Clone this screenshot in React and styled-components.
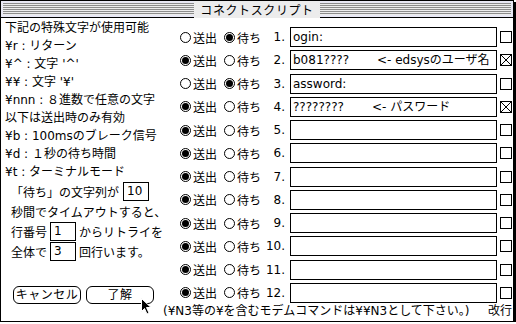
import React from 'react';
import styled, { createGlobalStyle } from 'styled-components';

const Global = createGlobalStyle`
  html, body { margin: 0; padding: 0; background: #fff; }
  body {
    font-family: "DejaVu Sans", "Noto Sans CJK JP", sans-serif;
    font-size: 12px;
    color: #000;
  }
`;

const Window = styled.div`
  position: relative;
  width: 514px;
  height: 322px;
  box-sizing: border-box;
  border: 1px solid #000;
  box-shadow: 2px 2px 0 #000;
  background: #fff;
  display: flex;
  flex-direction: column;
`;

const TitleBar = styled.div`
  height: 17px;
  flex: none;
  box-sizing: border-box;
  border-bottom: 1px solid #000;
  padding: 2px 2px 2px;
  background: #e8e8f4;
  display: flex;
`;

const Stripes = styled.div`
  flex: 1;
  display: flex;
  justify-content: center;
  align-items: center;
  background: repeating-linear-gradient(to bottom, #8c8c8c 0 1px, #ececec 1px 2px);
`;

const Title = styled.div`
  background: #ececec;
  padding: 0 6px;
  height: 17px;
  line-height: 17px;
  letter-spacing: 0.6px;
  font-family: "Noto Sans CJK JP", sans-serif;
`;

const Body = styled.div`
  flex: 1;
  display: grid;
  grid-template-columns: 162px 1fr;
  min-height: 0;
`;

const LeftCol = styled.div`
  display: flex;
  flex-direction: column;
  padding: 1px 0 0 4px;
  white-space: nowrap;
`;

const HelpLine = styled.div`
  height: 18px;
  line-height: 18px;
`;

const Settings = styled.div`
  padding-left: 6px;
  display: flex;
  flex-direction: column;
`;

const SettingLine = styled.div`
  height: 20px;
  display: flex;
  align-items: center;
  gap: ${p => p.$gap || 3}px;
`;

const NumBox = styled.div`
  width: 26px;
  height: 19px;
  box-sizing: border-box;
  border: 1px solid #000;
  padding-left: 3px;
  line-height: 17px;
`;

const Buttons = styled.div`
  margin-top: auto;
  margin-bottom: 18px;
  padding-left: 8px;
  display: flex;
  gap: 5px;
`;

const Button = styled.div`
  width: ${p => p.$w}px;
  height: 18px;
  box-sizing: border-box;
  border: 1px solid #000;
  border-radius: 6px;
  display: flex;
  align-items: center;
  justify-content: center;
  line-height: 16px;
  letter-spacing: 0.5px;
`;

const RightCol = styled.div`
  display: flex;
  flex-direction: column;
  padding-top: 9px;
  min-width: 0;
`;

const Rows = styled.div`
  display: flex;
  flex-direction: column;
  gap: 3.27px;
  padding-left: 17px;
`;

const Row = styled.div`
  height: 20px;
  display: flex;
  align-items: center;
`;

const Radio = styled.span`
  width: 11px;
  height: 11px;
  box-sizing: border-box;
  border: 1px solid #000;
  border-radius: 50%;
  display: flex;
  align-items: center;
  justify-content: center;
  flex: none;
  &::after {
    content: "";
    width: 7px;
    height: 7px;
    border-radius: 50%;
    background: ${p => (p.$on ? '#000' : 'transparent')};
  }
`;

const RadioLabel = styled.span`
  width: ${p => p.$w}px;
  margin-left: 2px;
  flex: none;
`;

const RowNum = styled.span`
  width: 29px;
  padding-right: 5px;
  box-sizing: border-box;
  text-align: right;
  flex: none;
`;

const Field = styled.div`
  width: 207px;
  height: 20px;
  box-sizing: border-box;
  border: 1px solid #000;
  padding-left: 2px;
  line-height: 18px;
  white-space: nowrap;
  overflow: hidden;
  flex: none;
`;

const Comment = styled.span`
  margin-left: 28px;
`;

const Check = styled.span`
  width: 12px;
  height: 12px;
  margin-left: 3px;
  box-sizing: border-box;
  border: 1px solid #000;
  flex: none;
  display: flex;
`;

const Note = styled.div`
  margin-top: auto;
  margin-bottom: 2px;
  height: 17px;
  line-height: 17px;
  display: flex;
  justify-content: space-between;
  padding-right: 1px;
  white-space: nowrap;
`;

const Cursor = styled.svg`
  position: absolute;
  left: 140px;
  top: 297px;
`;

const helpLines = [
  '下記の特殊文字が使用可能',
  '¥r : リターン',
  '¥^ : 文字 \'^\'',
  '¥¥ : 文字 \'¥\'',
  '¥nnn : ８進数で任意の文字',
  '以下は送出時のみ有効',
  '¥b : 100msのブレーク信号',
  '¥d : １秒の待ち時間',
  '¥t : ターミナルモード',
];

const rows = [
  { send: false, text: 'ogin:' },
  { send: true, text: 'b081????', comment: '<- edsysのユーザ名', checked: true },
  { send: false, text: 'assword:' },
  { send: true, text: '????????', comment: '<- パスワード', checked: true },
  { send: true }, { send: true }, { send: true }, { send: true },
  { send: true }, { send: true }, { send: true }, { send: true },
];

export default function App() {
  return (
    <>
      <Global />
      <Window>
        <TitleBar>
          <Stripes>
            <Title>コネクトスクリプト</Title>
          </Stripes>
        </TitleBar>
        <Body>
          <LeftCol>
            {helpLines.map((l, i) => (
              <HelpLine key={i}>{l}</HelpLine>
            ))}
            <Settings>
              <SettingLine $gap={4}>
                <span>「待ち」の文字列が</span>
                <NumBox>10</NumBox>
              </SettingLine>
              <SettingLine>秒間でタイムアウトすると、</SettingLine>
              <SettingLine>
                <span>行番号</span>
                <NumBox>1</NumBox>
                <span>からリトライを</span>
              </SettingLine>
              <SettingLine>
                <span>全体で</span>
                <NumBox>3</NumBox>
                <span>回行います。</span>
              </SettingLine>
            </Settings>
            <Buttons>
              <Button $w={68}>キャンセル</Button>
              <Button $w={68}>了解</Button>
            </Buttons>
          </LeftCol>
          <RightCol>
            <Rows>
              {rows.map((r, i) => (
                <Row key={i}>
                  <Radio $on={r.send} />
                  <RadioLabel $w={31}>送出</RadioLabel>
                  <Radio $on={!r.send} />
                  <RadioLabel $w={24}>待ち</RadioLabel>
                  <RowNum>{i + 1}.</RowNum>
                  <Field>
                    {r.text}
                    {r.comment && <Comment>{r.comment}</Comment>}
                  </Field>
                  <Check>
                    {r.checked && (
                      <svg width="10" height="10" viewBox="0 0 10 10">
                        <path d="M0 0L10 10M10 0L0 10" stroke="#000" strokeWidth="1" />
                      </svg>
                    )}
                  </Check>
                </Row>
              ))}
            </Rows>
            <Note>
              <span>(¥N3等の¥を含むモデムコマンドは¥¥N3として下さい。)</span>
              <span>改行</span>
            </Note>
          </RightCol>
        </Body>
        <Cursor width="11" height="17" viewBox="0 0 11 17">
          <path d="M0.5 0.5 L0.5 13.5 L3.5 10.5 L6 16 L8 15 L5.5 9.5 L10 9.5 Z" fill="#000" stroke="#fff" strokeWidth="1" />
        </Cursor>
      </Window>
    </>
  );
}
